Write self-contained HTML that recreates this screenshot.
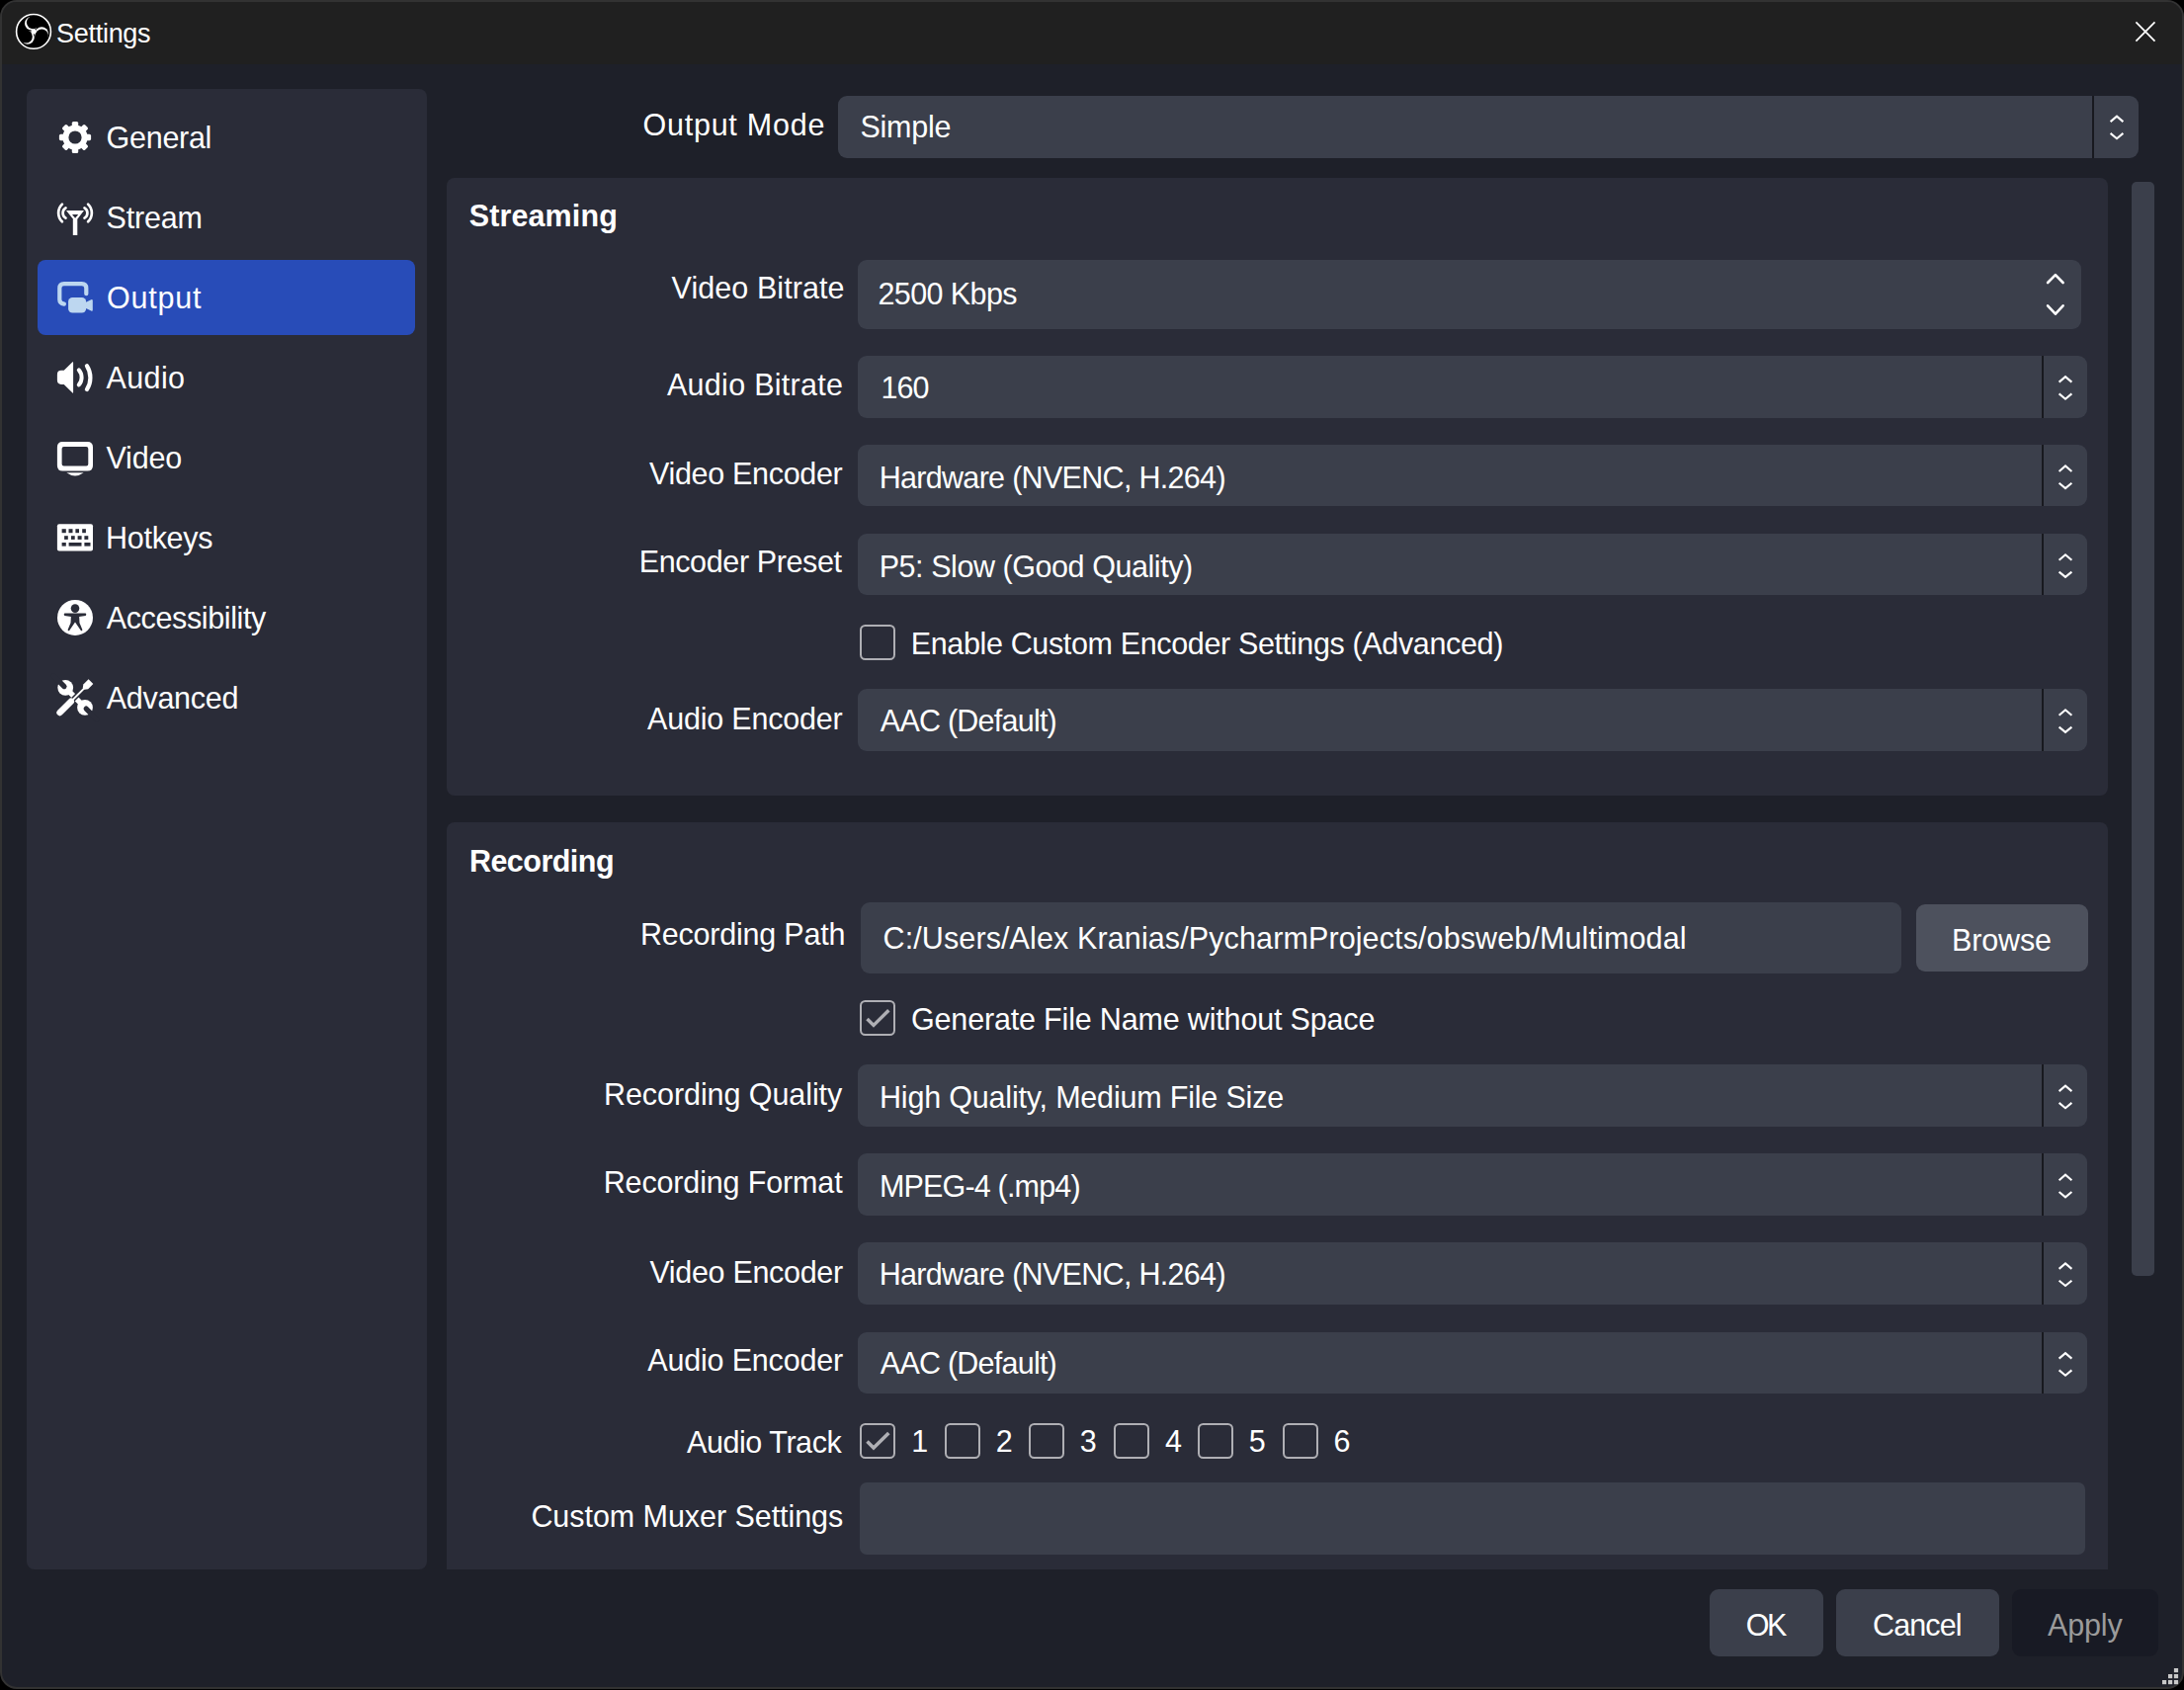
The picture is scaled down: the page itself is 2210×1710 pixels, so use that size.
<!DOCTYPE html>
<html><head><meta charset="utf-8"><style>
html,body{margin:0;padding:0;width:2210px;height:1710px;overflow:hidden;background:#000}
.r{position:absolute}
.t{position:absolute;white-space:nowrap;font-family:"Liberation Sans",sans-serif}
.cb{width:36px;height:36px;border:2.7px solid #afafb4;border-radius:5.5px;box-sizing:border-box}
</style></head><body>
<div class="r" style="left:0;top:0;width:2210px;height:1709px;background:#1e2029;border-radius:17px;border:2px solid #323232;box-sizing:border-box;overflow:hidden"><div class="r" style="left:0;top:0;width:100%;height:63px;background:#202020"></div></div><div class="r" style="left:27px;top:90px;width:405px;height:1498px;background:#2a2c38;border-radius:8px;"></div><div class="r" style="left:38px;top:263px;width:382px;height:76px;background:#284cb8;border-radius:8px;"></div><div class="r" style="left:848px;top:96.5px;width:1316px;height:63.19999999999999px;background:#3b3f4b;border-radius:9px;"></div><div class="r" style="left:2117px;top:96.5px;width:2px;height:63.19999999999999px;background:#18191f;border-radius:0px;"></div><div class="r" style="left:452px;top:180px;width:1681px;height:625px;background:#2a2c38;border-radius:8px;"></div><div class="r" style="left:452px;top:832px;width:1681px;height:756px;background:#2a2c38;border-radius:8px 8px 0 0px;"></div><div class="r" style="left:2157.3px;top:184px;width:22.699999999999818px;height:1107.2px;background:#3b3f4b;border-radius:5px;"></div><div class="r" style="left:868px;top:263px;width:1238px;height:70px;background:#3b3f4b;border-radius:9px;"></div><div class="r" style="left:868px;top:360px;width:1244px;height:63px;background:#3b3f4b;border-radius:9px;"></div><div class="r" style="left:2066px;top:360px;width:2px;height:63px;background:#18191f;border-radius:0px;"></div><div class="r" style="left:868px;top:450px;width:1244px;height:62px;background:#3b3f4b;border-radius:9px;"></div><div class="r" style="left:2066px;top:450px;width:2px;height:62px;background:#18191f;border-radius:0px;"></div><div class="r" style="left:868px;top:540px;width:1244px;height:62px;background:#3b3f4b;border-radius:9px;"></div><div class="r" style="left:2066px;top:540px;width:2px;height:62px;background:#18191f;border-radius:0px;"></div><div class="r" style="left:868px;top:697px;width:1244px;height:63px;background:#3b3f4b;border-radius:9px;"></div><div class="r" style="left:2066px;top:697px;width:2px;height:63px;background:#18191f;border-radius:0px;"></div><div class="r" style="left:871px;top:913px;width:1053px;height:72px;background:#3b3f4b;border-radius:9px;"></div><div class="r" style="left:1939px;top:915px;width:174px;height:68px;background:#4d515d;border-radius:9px;"></div><div class="r" style="left:868px;top:1077px;width:1244px;height:63px;background:#3b3f4b;border-radius:9px;"></div><div class="r" style="left:2066px;top:1077px;width:2px;height:63px;background:#18191f;border-radius:0px;"></div><div class="r" style="left:868px;top:1167px;width:1244px;height:63px;background:#3b3f4b;border-radius:9px;"></div><div class="r" style="left:2066px;top:1167px;width:2px;height:63px;background:#18191f;border-radius:0px;"></div><div class="r" style="left:868px;top:1257px;width:1244px;height:63px;background:#3b3f4b;border-radius:9px;"></div><div class="r" style="left:2066px;top:1257px;width:2px;height:63px;background:#18191f;border-radius:0px;"></div><div class="r" style="left:868px;top:1348px;width:1244px;height:62px;background:#3b3f4b;border-radius:9px;"></div><div class="r" style="left:2066px;top:1348px;width:2px;height:62px;background:#18191f;border-radius:0px;"></div><div class="r" style="left:870.4px;top:1500.2px;width:1239.6px;height:72.59999999999991px;background:#3b3f4b;border-radius:7px;"></div><div class="r" style="left:1730px;top:1608px;width:115px;height:68px;background:#3b3f4b;border-radius:9px;"></div><div class="r" style="left:1858px;top:1608px;width:165px;height:68px;background:#3b3f4b;border-radius:9px;"></div><div class="r" style="left:2036px;top:1608px;width:148px;height:68px;background:#181a24;border-radius:9px;"></div><div class="r cb" style="left:870.4px;top:632px"></div><div class="r cb" style="left:870.3px;top:1012.3px"></div><div class="r cb" style="left:870px;top:1440px"></div><div class="r cb" style="left:956px;top:1440px"></div><div class="r cb" style="left:1041.4px;top:1440px"></div><div class="r cb" style="left:1127.1px;top:1440px"></div><div class="r cb" style="left:1212.4px;top:1440px"></div><div class="r cb" style="left:1298px;top:1440px"></div><div class="t" style="left:57.0px;top:20.8px;font-size:27px;line-height:27px;font-weight:normal;letter-spacing:-0.280px;color:#ffffff">Settings</div><div class="t" style="left:107.6px;top:124.3px;font-size:30.5px;line-height:30.5px;font-weight:normal;letter-spacing:-0.289px;color:#ffffff">General</div><div class="t" style="left:107.6px;top:205.3px;font-size:30.5px;line-height:30.5px;font-weight:normal;letter-spacing:-0.200px;color:#ffffff">Stream</div><div class="t" style="left:108.0px;top:286.3px;font-size:30.5px;line-height:30.5px;font-weight:normal;letter-spacing:0.803px;color:#ffffff">Output</div><div class="t" style="left:107.5px;top:367.3px;font-size:30.5px;line-height:30.5px;font-weight:normal;letter-spacing:0.389px;color:#ffffff">Audio</div><div class="t" style="left:107.5px;top:448.3px;font-size:30.5px;line-height:30.5px;font-weight:normal;letter-spacing:-0.173px;color:#ffffff">Video</div><div class="t" style="left:107.1px;top:529.3px;font-size:30.5px;line-height:30.5px;font-weight:normal;letter-spacing:-0.304px;color:#ffffff">Hotkeys</div><div class="t" style="left:107.7px;top:610.3px;font-size:30.5px;line-height:30.5px;font-weight:normal;letter-spacing:-0.371px;color:#ffffff">Accessibility</div><div class="t" style="left:107.7px;top:691.3px;font-size:30.5px;line-height:30.5px;font-weight:normal;letter-spacing:-0.285px;color:#ffffff">Advanced</div><div class="t" style="left:650.5px;top:110.8px;font-size:30.5px;line-height:30.5px;font-weight:normal;letter-spacing:0.753px;color:#ffffff">Output Mode</div><div class="t" style="left:870.4px;top:113.4px;font-size:30.5px;line-height:30.5px;font-weight:normal;letter-spacing:-0.213px;color:#ffffff">Simple</div><div class="t" style="left:474.7px;top:203.3px;font-size:30.5px;line-height:30.5px;font-weight:bold;letter-spacing:0.123px;color:#ffffff">Streaming</div><div class="t" style="left:679.6px;top:276.3px;font-size:30.5px;line-height:30.5px;font-weight:normal;letter-spacing:0.065px;color:#ffffff">Video Bitrate</div><div class="t" style="left:888.4px;top:282.2px;font-size:30.5px;line-height:30.5px;font-weight:normal;letter-spacing:-0.587px;color:#ffffff">2500 Kbps</div><div class="t" style="left:675.0px;top:373.5px;font-size:30.5px;line-height:30.5px;font-weight:normal;letter-spacing:0.278px;color:#ffffff">Audio Bitrate</div><div class="t" style="left:891.4px;top:377.3px;font-size:30.5px;line-height:30.5px;font-weight:normal;letter-spacing:-0.863px;color:#ffffff">160</div><div class="t" style="left:657.0px;top:463.5px;font-size:30.5px;line-height:30.5px;font-weight:normal;letter-spacing:-0.315px;color:#ffffff">Video Encoder</div><div class="t" style="left:889.7px;top:468.2px;font-size:30.5px;line-height:30.5px;font-weight:normal;letter-spacing:-0.693px;color:#ffffff">Hardware (NVENC, H.264)</div><div class="t" style="left:646.7px;top:553.1px;font-size:30.5px;line-height:30.5px;font-weight:normal;letter-spacing:-0.373px;color:#ffffff">Encoder Preset</div><div class="t" style="left:889.7px;top:558.0px;font-size:30.5px;line-height:30.5px;font-weight:normal;letter-spacing:-0.441px;color:#ffffff">P5: Slow (Good Quality)</div><div class="t" style="left:921.7px;top:635.5px;font-size:30.5px;line-height:30.5px;font-weight:normal;letter-spacing:-0.352px;color:#ffffff">Enable Custom Encoder Settings (Advanced)</div><div class="t" style="left:655.0px;top:711.8px;font-size:30.5px;line-height:30.5px;font-weight:normal;letter-spacing:-0.194px;color:#ffffff">Audio Encoder</div><div class="t" style="left:890.8px;top:714.3px;font-size:30.5px;line-height:30.5px;font-weight:normal;letter-spacing:-0.765px;color:#ffffff">AAC (Default)</div><div class="t" style="left:474.9px;top:856.2px;font-size:30.5px;line-height:30.5px;font-weight:bold;letter-spacing:-0.523px;color:#ffffff">Recording</div><div class="t" style="left:648.0px;top:929.5px;font-size:30.5px;line-height:30.5px;font-weight:normal;letter-spacing:-0.214px;color:#ffffff">Recording Path</div><div class="t" style="left:893.5px;top:933.5px;font-size:30.5px;line-height:30.5px;font-weight:normal;letter-spacing:0.114px;color:#ffffff">C:/Users/Alex Kranias/PycharmProjects/obsweb/Multimodal</div><div class="t" style="left:1975.0px;top:935.5px;font-size:30.5px;line-height:30.5px;font-weight:normal;letter-spacing:-0.148px;color:#ffffff">Browse</div><div class="t" style="left:922.0px;top:1016.0px;font-size:30.5px;line-height:30.5px;font-weight:normal;letter-spacing:-0.172px;color:#ffffff">Generate File Name without Space</div><div class="t" style="left:611.0px;top:1091.5px;font-size:30.5px;line-height:30.5px;font-weight:normal;letter-spacing:-0.073px;color:#ffffff">Recording Quality</div><div class="t" style="left:890.0px;top:1094.5px;font-size:30.5px;line-height:30.5px;font-weight:normal;letter-spacing:-0.191px;color:#ffffff">High Quality, Medium File Size</div><div class="t" style="left:610.7px;top:1181.3px;font-size:30.5px;line-height:30.5px;font-weight:normal;letter-spacing:-0.141px;color:#ffffff">Recording Format</div><div class="t" style="left:890.0px;top:1184.7px;font-size:30.5px;line-height:30.5px;font-weight:normal;letter-spacing:-0.831px;color:#ffffff">MPEG-4 (.mp4)</div><div class="t" style="left:657.4px;top:1271.7px;font-size:30.5px;line-height:30.5px;font-weight:normal;letter-spacing:-0.315px;color:#ffffff">Video Encoder</div><div class="t" style="left:889.7px;top:1274.1px;font-size:30.5px;line-height:30.5px;font-weight:normal;letter-spacing:-0.693px;color:#ffffff">Hardware (NVENC, H.264)</div><div class="t" style="left:655.3px;top:1361.1px;font-size:30.5px;line-height:30.5px;font-weight:normal;letter-spacing:-0.185px;color:#ffffff">Audio Encoder</div><div class="t" style="left:890.8px;top:1364.1px;font-size:30.5px;line-height:30.5px;font-weight:normal;letter-spacing:-0.765px;color:#ffffff">AAC (Default)</div><div class="t" style="left:695.0px;top:1443.8px;font-size:30.5px;line-height:30.5px;font-weight:normal;letter-spacing:-0.435px;color:#ffffff">Audio Track</div><div class="t" style="left:922.3px;top:1443.1px;font-size:30.5px;line-height:30.5px;font-weight:normal;letter-spacing:0.000px;color:#ffffff">1</div><div class="t" style="left:1007.8px;top:1443.1px;font-size:30.5px;line-height:30.5px;font-weight:normal;letter-spacing:0.000px;color:#ffffff">2</div><div class="t" style="left:1092.8px;top:1443.1px;font-size:30.5px;line-height:30.5px;font-weight:normal;letter-spacing:0.000px;color:#ffffff">3</div><div class="t" style="left:1179.0px;top:1443.1px;font-size:30.5px;line-height:30.5px;font-weight:normal;letter-spacing:0.000px;color:#ffffff">4</div><div class="t" style="left:1263.8px;top:1443.1px;font-size:30.5px;line-height:30.5px;font-weight:normal;letter-spacing:0.000px;color:#ffffff">5</div><div class="t" style="left:1349.5px;top:1443.1px;font-size:30.5px;line-height:30.5px;font-weight:normal;letter-spacing:0.000px;color:#ffffff">6</div><div class="t" style="left:537.4px;top:1518.5px;font-size:30.5px;line-height:30.5px;font-weight:normal;letter-spacing:-0.056px;color:#ffffff">Custom Muxer Settings</div><div class="t" style="left:1766.7px;top:1628.5px;font-size:30.5px;line-height:30.5px;font-weight:normal;letter-spacing:-2.524px;color:#ffffff">OK</div><div class="t" style="left:1895.0px;top:1628.5px;font-size:30.5px;line-height:30.5px;font-weight:normal;letter-spacing:-0.893px;color:#ffffff">Cancel</div><div class="t" style="left:2072.0px;top:1628.5px;font-size:30.5px;line-height:30.5px;font-weight:normal;letter-spacing:-0.161px;color:#9b9b9b">Apply</div>
<svg class="r" style="left:0;top:0" width="2210" height="1710" viewBox="0 0 2210 1710"><path d="M2161.4 22.4L2180.5 41.6M2180.5 22.4L2161.4 41.6" stroke="#fff" stroke-width="1.7" fill="none"/><circle cx="34" cy="31.9" r="17.4" fill="#000"/><circle cx="34" cy="31.9" r="2.6" fill="#fff"/><circle cx="31.92" cy="23.65" r="6.9" fill="#fff"/><circle cx="42.19" cy="34.22" r="6.9" fill="#fff"/><circle cx="27.89" cy="37.83" r="6.9" fill="#fff"/><circle cx="33.51" cy="22.61" r="6.6" fill="#000"/><circle cx="42.29" cy="36.12" r="6.6" fill="#000"/><circle cx="26.20" cy="36.97" r="6.6" fill="#000"/><circle cx="34" cy="31.9" r="17.45" fill="none" stroke="#000" stroke-width="1.2"/><circle cx="34" cy="31.9" r="17.4" fill="none" stroke="#fff" stroke-width="1.6"/><circle cx="76" cy="139" r="12.6" fill="#fff"/><rect x="72.8" y="122.9" width="6.4" height="8" rx="1.6" fill="#fff" transform="rotate(0 76 139)"/><rect x="72.8" y="122.9" width="6.4" height="8" rx="1.6" fill="#fff" transform="rotate(45 76 139)"/><rect x="72.8" y="122.9" width="6.4" height="8" rx="1.6" fill="#fff" transform="rotate(90 76 139)"/><rect x="72.8" y="122.9" width="6.4" height="8" rx="1.6" fill="#fff" transform="rotate(135 76 139)"/><rect x="72.8" y="122.9" width="6.4" height="8" rx="1.6" fill="#fff" transform="rotate(180 76 139)"/><rect x="72.8" y="122.9" width="6.4" height="8" rx="1.6" fill="#fff" transform="rotate(225 76 139)"/><rect x="72.8" y="122.9" width="6.4" height="8" rx="1.6" fill="#fff" transform="rotate(270 76 139)"/><rect x="72.8" y="122.9" width="6.4" height="8" rx="1.6" fill="#fff" transform="rotate(315 76 139)"/><circle cx="76" cy="139" r="6.6" fill="#2a2c38"/><path d="M73.8 222 L78.3 222 L78.3 238 L73.8 238 Z" fill="#fff"/><path d="M67 213 L85 213 L76.2 224.5 Z M73 216.9 L79.2 216.9 L76.1 220.8 Z" fill="#fff" fill-rule="evenodd"/><path d="M66.50 210.4 A5.9 5.9 0 0 0 66.50 220.6" stroke="#fff" stroke-width="2.7" fill="none" stroke-linecap="round"/><path d="M62.90 206.6 A12.2 12.2 0 0 0 62.90 224.2" stroke="#fff" stroke-width="2.7" fill="none" stroke-linecap="round"/><path d="M85.50 210.4 A5.9 5.9 0 0 1 85.50 220.6" stroke="#fff" stroke-width="2.7" fill="none" stroke-linecap="round"/><path d="M89.10 206.6 A12.2 12.2 0 0 1 89.10 224.2" stroke="#fff" stroke-width="2.7" fill="none" stroke-linecap="round"/><path d="M87.3 297.2 L87.3 291.6 Q87.3 287.1 82.8 287.1 L64.8 287.1 Q60.3 287.1 60.3 291.6 L60.3 303.2 Q60.3 306.8 64.9 307.6" stroke="#bdd7f0" stroke-width="4.2" fill="none" stroke-linecap="round" stroke-linejoin="round"/><rect x="69.1" y="301.1" width="18" height="15.5" rx="4.2" fill="#bdd7f0"/><path d="M85.5 306.6 L92.2 303.3 Q93.8 302.6 93.8 304.5 L93.8 313.5 Q93.8 315.4 92.2 314.6 L85.5 311.2 Z" fill="#bdd7f0"/><path d="M64.7 374.8 L73.4 366.3 Q74.1 365.8 74.1 366.8 L74.1 397 Q74.1 398 73.4 397.5 L64.7 388.9 L62 388.9 Q57.9 388.9 57.9 384.8 L57.9 379 Q57.9 374.8 62 374.8 Z" fill="#fff"/><path d="M79.8 374.4 A11.4 11.4 0 0 1 79.8 389.4" stroke="#fff" stroke-width="4" fill="none" stroke-linecap="round"/><path d="M87.9 370.2 A22.1 22.1 0 0 1 87.9 394.1" stroke="#fff" stroke-width="4.2" fill="none" stroke-linecap="round"/><path d="M63.4 447 L88.5 447 Q94 447 94 452.5 L94 471.1 Q94 476.6 88.5 476.6 L63.4 476.6 Q57.9 476.6 57.9 471.1 L57.9 452.5 Q57.9 447 63.4 447 Z M64.6 452.1 Q62.6 452.1 62.6 454.1 L62.6 469.6 Q62.6 471.6 64.6 471.6 L87.3 471.6 Q89.3 471.6 89.3 469.6 L89.3 454.1 Q89.3 452.1 87.3 452.1 Z" fill="#fff" fill-rule="evenodd"/><path d="M67.3 478.3 L84.7 478.3 Q80 481.6 76 481.6 Q72 481.6 67.3 478.3 Z" fill="#fff"/><rect x="57.9" y="530.2" width="36.1" height="27.3" rx="2" fill="#fff"/><rect x="62.6" y="535.2" width="4.20" height="4" fill="#2a2c38"/><rect x="69.5" y="535.2" width="4.00" height="4" fill="#2a2c38"/><rect x="76.4" y="535.2" width="3.60" height="4" fill="#2a2c38"/><rect x="83.2" y="535.2" width="3.70" height="4" fill="#2a2c38"/><rect x="65.1" y="542.2" width="3.70" height="3.7" fill="#2a2c38"/><rect x="72" y="542.2" width="3.70" height="3.7" fill="#2a2c38"/><rect x="78.6" y="542.2" width="4.00" height="3.7" fill="#2a2c38"/><rect x="85.4" y="542.2" width="3.90" height="3.7" fill="#2a2c38"/><rect x="62.6" y="549" width="4.20" height="3.6" fill="#2a2c38"/><rect x="69.6" y="549" width="12.90" height="3.6" fill="#2a2c38"/><rect x="85.4" y="549" width="6.10" height="3.6" fill="#2a2c38"/><circle cx="76" cy="624.9" r="18" fill="#fff"/><circle cx="76" cy="615.6" r="4.3" fill="#2a2c38"/><path d="M65.3 620.5 L86.7 620.5 Q88 621.7 86.7 622.9 L80 624 L72 624 L65.3 622.9 Q64 621.7 65.3 620.5 Z" fill="#2a2c38"/><path d="M72 621 L80 621 L80.5 630.2 L83.3 636.9 Q83.6 638.6 82 638.3 L76 629.6 L70 638.3 Q68.4 638.6 68.7 636.9 L71.5 630.2 Z" fill="#2a2c38"/><line x1="66.2" y1="695.8" x2="86.0" y2="715.9" stroke="#fff" stroke-width="5.4"/><circle cx="66.2" cy="695.8" r="7.9" fill="#fff"/><circle cx="86.0" cy="715.9" r="7.9" fill="#fff"/><path d="M65.0 694.5999999999999 L54.2 683.8" stroke="#2a2c38" stroke-width="5.2" stroke-linecap="round"/><path d="M87.2 717.1 L98.0 727.9" stroke="#2a2c38" stroke-width="5.2" stroke-linecap="round"/><line x1="66.20" y1="715.40" x2="86.00" y2="695.60" stroke="#2a2c38" stroke-width="5"/><line x1="60.54" y1="721.06" x2="71.86" y2="709.74" stroke="#fff" stroke-width="6.4" stroke-linecap="round"/><line x1="71.86" y1="709.74" x2="85.29" y2="696.31" stroke="#fff" stroke-width="1.9"/><path d="M83.74 696.17 L84.30 692.49 L89.54 687.26 L94.34 692.06 L89.11 697.30 L85.43 697.86 Z" fill="#fff"/><path d="M2135.6 123.1 L2142 117.6 L2148.4 123.1 M2135.6 134.9 L2142 140.2 L2148.4 134.9" stroke="#fff" stroke-width="2.1" fill="none"/><path d="M2083.6 386.6 L2090 381.1 L2096.4 386.6 M2083.6 398.4 L2090 403.7 L2096.4 398.4" stroke="#fff" stroke-width="2.1" fill="none"/><path d="M2083.6 477.0 L2090 471.5 L2096.4 477.0 M2083.6 488.79999999999995 L2090 494.09999999999997 L2096.4 488.79999999999995" stroke="#fff" stroke-width="2.1" fill="none"/><path d="M2083.6 566.8000000000001 L2090 561.3000000000001 L2096.4 566.8000000000001 M2083.6 578.6 L2090 583.9000000000001 L2096.4 578.6" stroke="#fff" stroke-width="2.1" fill="none"/><path d="M2083.6 723.8000000000001 L2090 718.3000000000001 L2096.4 723.8000000000001 M2083.6 735.6 L2090 740.9000000000001 L2096.4 735.6" stroke="#fff" stroke-width="2.1" fill="none"/><path d="M2083.6 1104.1 L2090 1098.6 L2096.4 1104.1 M2083.6 1115.9 L2090 1121.2 L2096.4 1115.9" stroke="#fff" stroke-width="2.1" fill="none"/><path d="M2083.6 1194.1999999999998 L2090 1188.6999999999998 L2096.4 1194.1999999999998 M2083.6 1206.0 L2090 1211.3 L2096.4 1206.0" stroke="#fff" stroke-width="2.1" fill="none"/><path d="M2083.6 1283.8999999999999 L2090 1278.3999999999999 L2096.4 1283.8999999999999 M2083.6 1295.7 L2090 1301.0 L2096.4 1295.7" stroke="#fff" stroke-width="2.1" fill="none"/><path d="M2083.6 1374.6 L2090 1369.1 L2096.4 1374.6 M2083.6 1386.4 L2090 1391.7 L2096.4 1386.4" stroke="#fff" stroke-width="2.1" fill="none"/><path d="M2072.1 286 L2079.9 278.2 L2087.6 286 M2072.1 309.3 L2079.9 317.7 L2087.6 309.3" stroke="#fff" stroke-width="2.6" fill="none" stroke-linecap="round" stroke-linejoin="round"/><path d="M877.5 1030.9 L884.0 1037.4 L899.3 1022.2" stroke="#afafb4" stroke-width="3.5" fill="none"/><path d="M877.5 1458.6000000000001 L884.0 1465.1000000000001 L899.3 1449.9" stroke="#afafb4" stroke-width="3.5" fill="none"/><rect x="2199.9" y="1688" width="4.2" height="4.2" fill="#c8c8c8"/><rect x="2194" y="1694" width="4.2" height="4.2" fill="#c8c8c8"/><rect x="2199.9" y="1694" width="4.2" height="4.2" fill="#c8c8c8"/><rect x="2188" y="1700" width="4.2" height="4.2" fill="#c8c8c8"/><rect x="2194" y="1700" width="4.2" height="4.2" fill="#c8c8c8"/><rect x="2199.9" y="1700" width="4.2" height="4.2" fill="#c8c8c8"/></svg>
</body></html>
